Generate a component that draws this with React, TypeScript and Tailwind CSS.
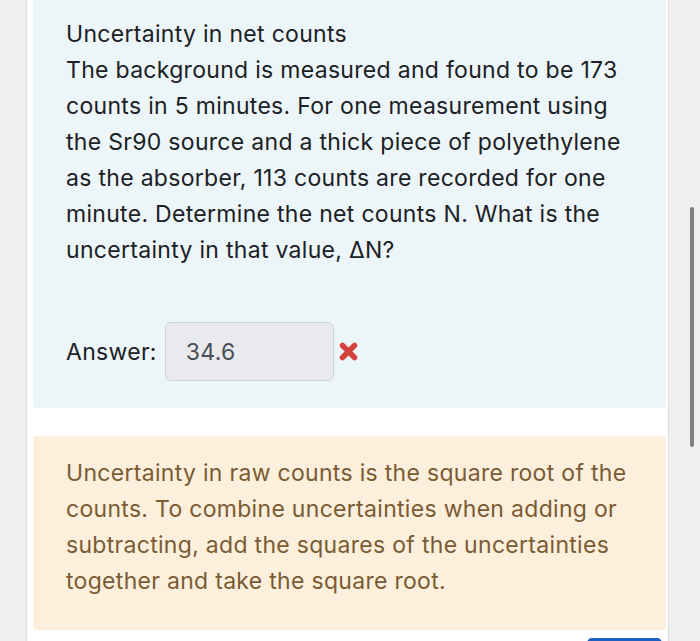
import React from "react";

export default function App() {
  return (
    <div
      className="relative w-[700px] h-[641px] overflow-hidden bg-[#efefef]"
      style={{ fontFamily: "Inter, 'Noto Sans', sans-serif" }}
    >
      <div className="ml-[26px] w-[643px] h-[641px] bg-white border-x border-[#dedede] pl-[6px] pr-[2px]">
        <div className="bg-[#ecf5f8] rounded-b-[4px] pl-[33px] pr-[10px] pt-[16px] pb-[27px] text-[23px] leading-[36px] text-[#1b2125] tracking-[0.3px] whitespace-nowrap">
          <p>Uncertainty in net counts</p>
          <p>
            The background is measured and found to be 173
            <br />
            counts in 5 minutes. For one measurement using
            <br />
            the Sr90 source and a thick piece of polyethylene
            <br />
            as the absorber, 113 counts are recorded for one
            <br />
            minute. Determine the net counts N. What is the
            <br />
            uncertainty in that value, ΔN?
          </p>
          <div className="mt-[54px] flex items-center">
            <span>Answer:</span>
            <div className="ml-[8px] w-[169px] h-[59px] bg-[#e9eaed] border border-[#cfd2d6] rounded-[6px] flex items-center pl-[20px] text-[#4a4f55]">
              34.6
            </div>
            <svg className="ml-[5px]" width="19" height="19" viewBox="0 0 19 19">
              <path
                d="M3.5 3.5 L15.5 15.5 M15.5 3.5 L3.5 15.5"
                stroke="#d4423d"
                strokeWidth="5.5"
                strokeLinecap="round"
              />
            </svg>
          </div>
        </div>
        <div className="mt-[28px] bg-[#fcefdc] rounded-[4px] pl-[33px] pr-[10px] pt-[19px] pb-[31px] text-[23px] leading-[36px] text-[#7a5b33] tracking-[0.3px] whitespace-nowrap">
          <p>
            Uncertainty in raw counts is the square root of the
            <br />
            counts. To combine uncertainties when adding or
            <br />
            subtracting, add the squares of the uncertainties
            <br />
            together and take the square root.
          </p>
        </div>
        <div className="mt-[8px] flex justify-end pr-[4px]">
          <div className="w-[75px] h-[20px] bg-[#1f5fbf] rounded-[5px]" />
        </div>
      </div>
      <div className="absolute left-[690px] top-[207px] w-[4px] h-[240px] rounded-full bg-[#7f7f7f]" />
    </div>
  );
}
